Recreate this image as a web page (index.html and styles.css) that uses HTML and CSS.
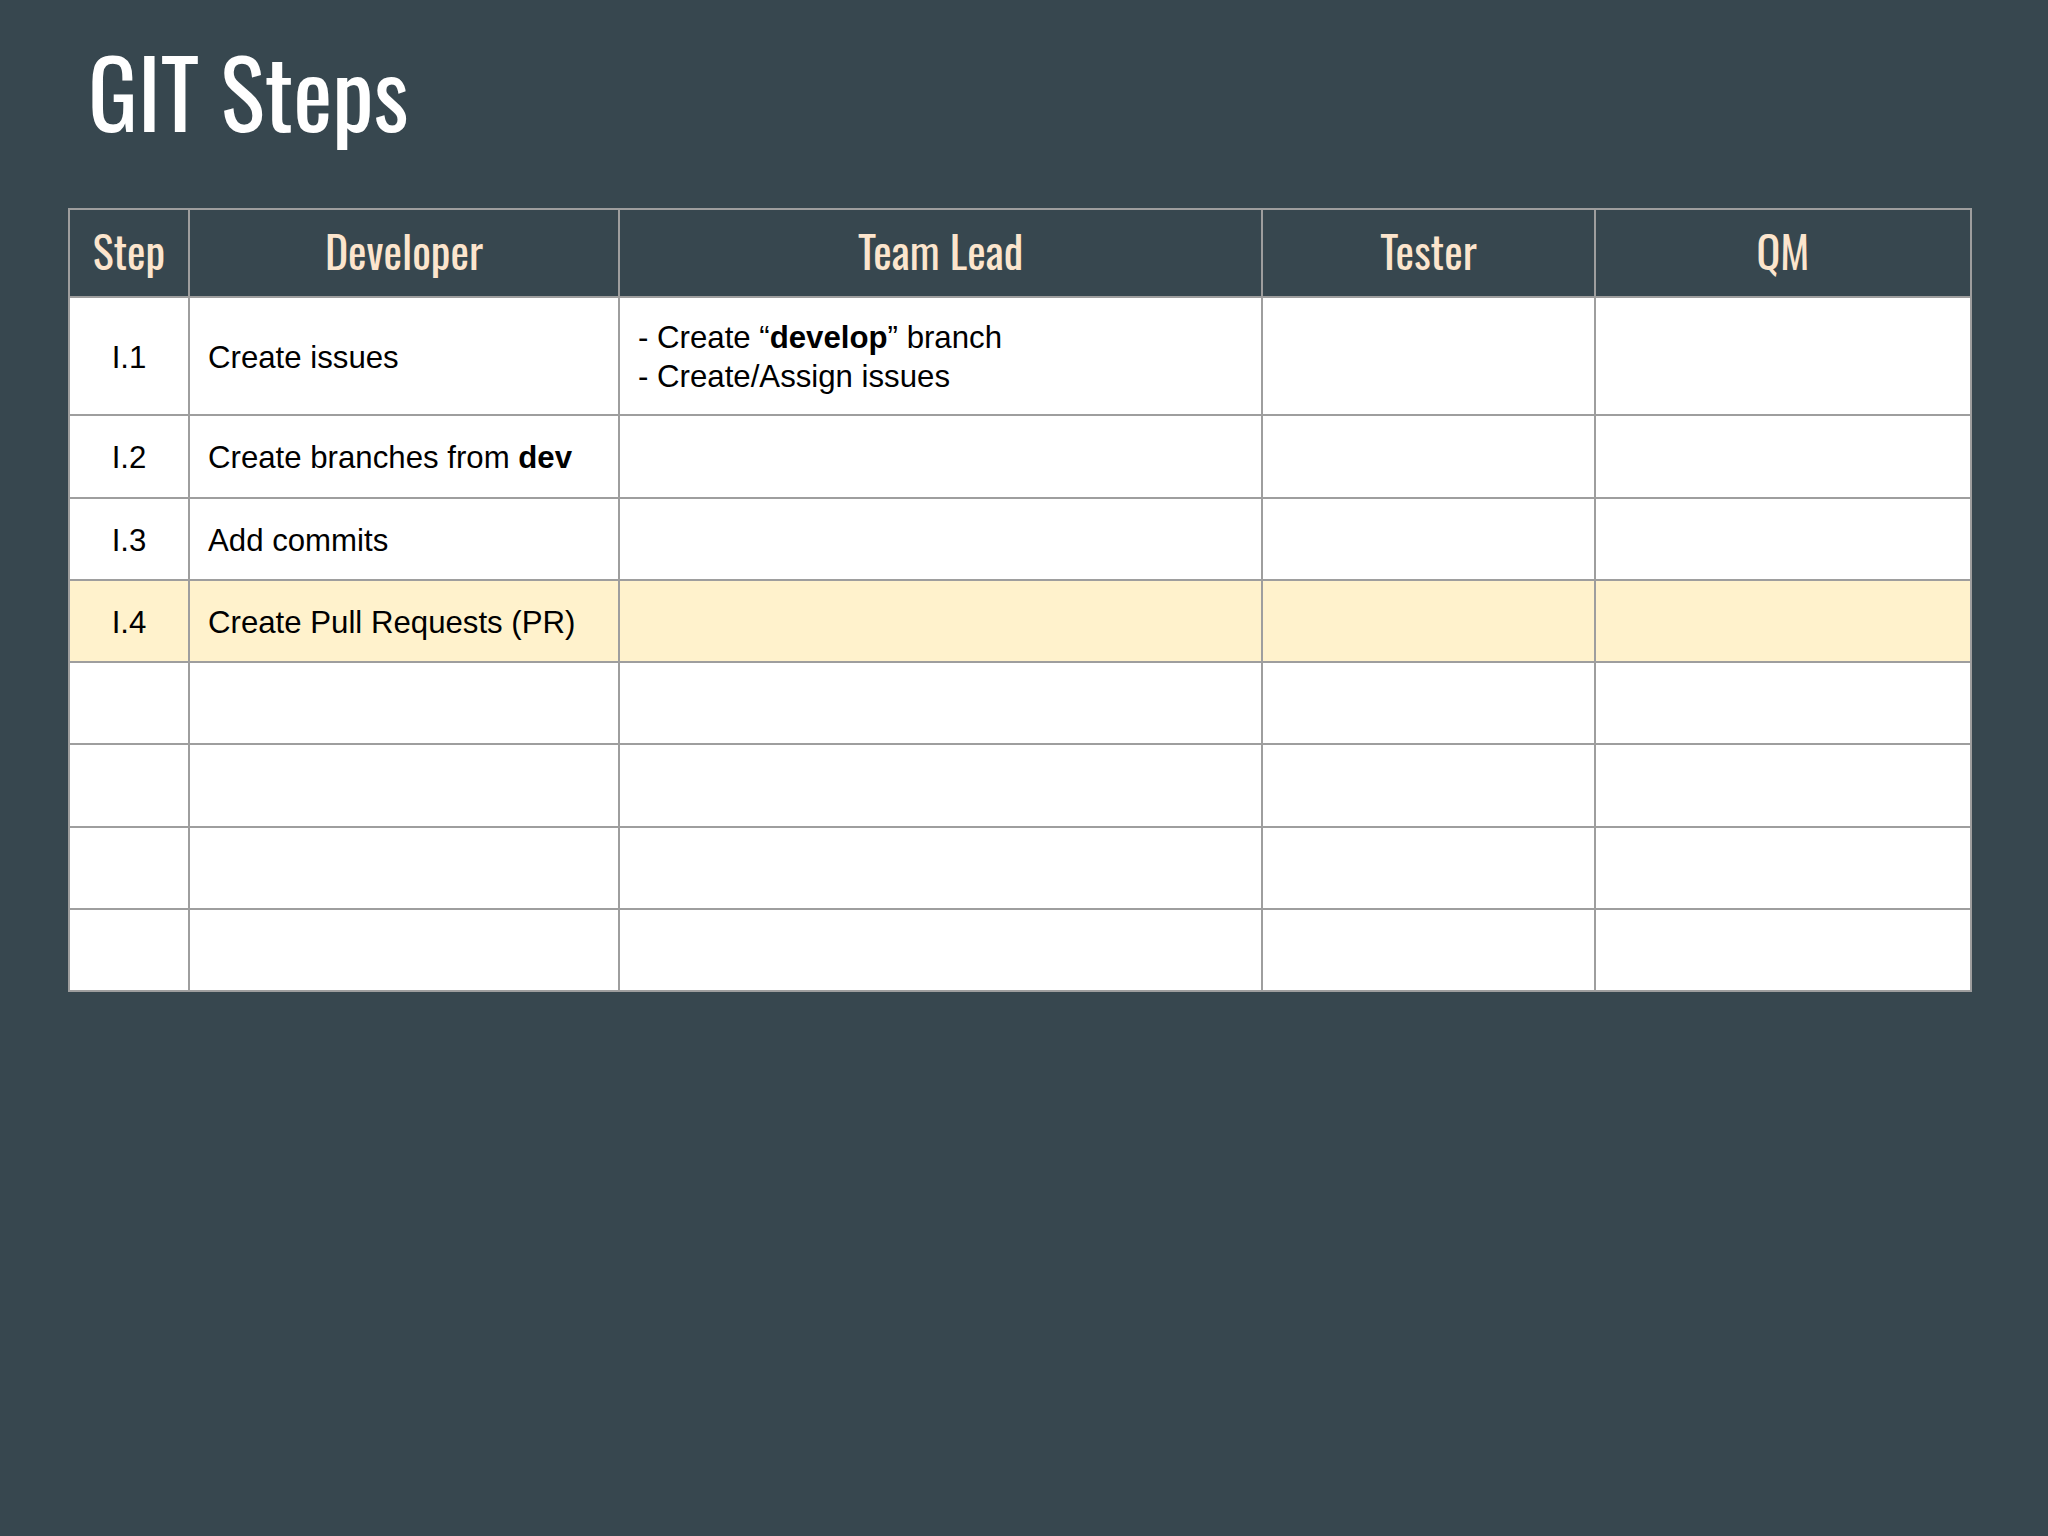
FILE: index.html
```html
<!DOCTYPE html>
<html lang="en">
<head>
<meta charset="utf-8">
<title>GIT Steps</title>
<link rel="stylesheet" href="styles.css">
</head>
<body>
<main class="slide">
  <h1 class="title">GIT Steps</h1>
  <div class="grid">
    <div class="cell head">Step</div>
    <div class="cell head">Developer</div>
    <div class="cell head">Team Lead</div>
    <div class="cell head">Tester</div>
    <div class="cell head">QM</div>

    <div class="cell step">I.1</div>
    <div class="cell">Create issues</div>
    <div class="cell"><div>- Create “<b>develop</b>” branch<br>- Create/Assign issues</div></div>
    <div class="cell"></div>
    <div class="cell"></div>

    <div class="cell step">I.2</div>
    <div class="cell"><span>Create branches from <b>dev</b></span></div>
    <div class="cell"></div>
    <div class="cell"></div>
    <div class="cell"></div>

    <div class="cell step">I.3</div>
    <div class="cell">Add commits</div>
    <div class="cell"></div>
    <div class="cell"></div>
    <div class="cell"></div>

    <div class="cell step hl">I.4</div>
    <div class="cell hl">Create Pull Requests (PR)</div>
    <div class="cell hl"></div>
    <div class="cell hl"></div>
    <div class="cell hl"></div>

    <div class="cell step"></div>
    <div class="cell"></div>
    <div class="cell"></div>
    <div class="cell"></div>
    <div class="cell"></div>

    <div class="cell step"></div>
    <div class="cell"></div>
    <div class="cell"></div>
    <div class="cell"></div>
    <div class="cell"></div>

    <div class="cell step"></div>
    <div class="cell"></div>
    <div class="cell"></div>
    <div class="cell"></div>
    <div class="cell"></div>

    <div class="cell step"></div>
    <div class="cell"></div>
    <div class="cell"></div>
    <div class="cell"></div>
    <div class="cell"></div>
  </div>
</main>
</body>
</html>
```
FILE: styles.css
```css
html, body {
  margin: 0;
  padding: 0;
  background: #37474f;
}

.slide {
  width: 2048px;
  height: 1536px;
  box-sizing: border-box;
  padding: 40px 0 0 88px;
}

.title {
  margin: 0;
  font-family: "Oswald", "Liberation Sans", sans-serif;
  font-weight: 400;
  font-size: 93px;
  line-height: 100px;
  color: #ffffff;
}

.grid {
  margin: 68px 0 0 -20px;
  width: 1904px;
  box-sizing: border-box;
  display: grid;
  grid-template-columns: 118px 428px 641px 331px 374px;
  grid-template-rows: 86px 116px 81px 80px 80px 80px 81px 80px 80px;
  gap: 2px;
  padding: 2px;
  background: #9e9e9e;
}

.cell {
  background: #ffffff;
  display: flex;
  align-items: center;
  padding: 2px 18px 0;
  font-family: "Liberation Sans", Arial, sans-serif;
  font-size: 31.2px;
  line-height: 39px;
  color: #000000;
  overflow: hidden;
}

.cell b {
  font-weight: 700;
}

.head {
  background: #37474f;
  justify-content: center;
  padding: 0 0 4px;
  font-family: "Oswald", "Liberation Sans", sans-serif;
  font-size: 44px;
  line-height: 60px;
  color: #fce5cd;
}

.step {
  justify-content: center;
  padding: 2px 0 0;
}

.hl {
  background: #fff2cc;
}
```
